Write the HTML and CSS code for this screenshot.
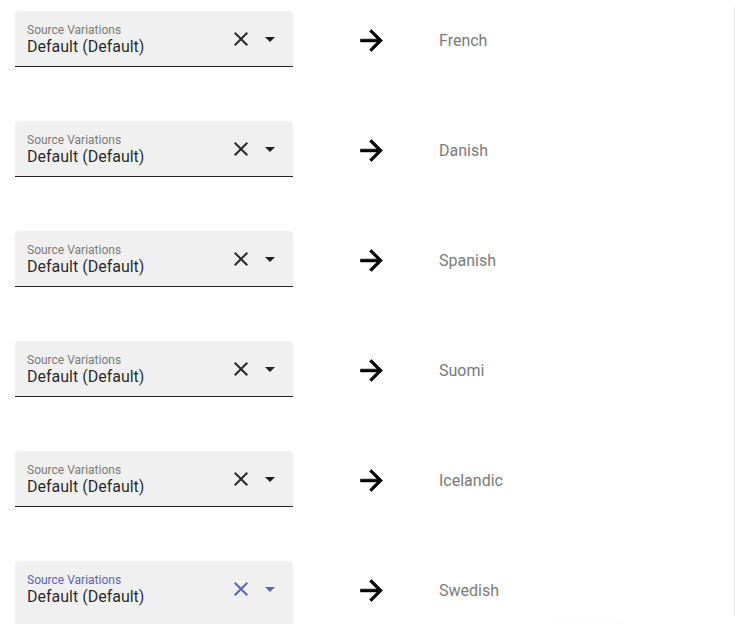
FILE: index.html
```html
<!DOCTYPE html>
<html lang="en">
<head>
<meta charset="utf-8">
<title>Variations</title>
<link rel="stylesheet" href="styles.css">
</head>
<body>
<div class="page">
  <main class="main">
    <div class="rows">
      <div class="row">
        <div class="field">
          <div class="infix"><div class="label">Source Variations</div><div class="value">Default (Default)</div></div>
          <svg class="clear" viewBox="0 0 24 24"><path d="M19 6.41L17.59 5 12 10.59 6.41 5 5 6.41 10.59 12 5 17.59 6.41 19 12 13.41 17.59 19 19 17.59 13.41 12z"/></svg>
          <span class="caret"></span>
        </div>
        <svg class="arrow" viewBox="0 0 24 24"><path d="M12 4l-1.41 1.41L16.17 11H4v2h12.17l-5.58 5.59L12 20l8-8z"/></svg>
        <div class="target">French</div>
      </div>
      <div class="row">
        <div class="field">
          <div class="infix"><div class="label">Source Variations</div><div class="value">Default (Default)</div></div>
          <svg class="clear" viewBox="0 0 24 24"><path d="M19 6.41L17.59 5 12 10.59 6.41 5 5 6.41 10.59 12 5 17.59 6.41 19 12 13.41 17.59 19 19 17.59 13.41 12z"/></svg>
          <span class="caret"></span>
        </div>
        <svg class="arrow" viewBox="0 0 24 24"><path d="M12 4l-1.41 1.41L16.17 11H4v2h12.17l-5.58 5.59L12 20l8-8z"/></svg>
        <div class="target">Danish</div>
      </div>
      <div class="row">
        <div class="field">
          <div class="infix"><div class="label">Source Variations</div><div class="value">Default (Default)</div></div>
          <svg class="clear" viewBox="0 0 24 24"><path d="M19 6.41L17.59 5 12 10.59 6.41 5 5 6.41 10.59 12 5 17.59 6.41 19 12 13.41 17.59 19 19 17.59 13.41 12z"/></svg>
          <span class="caret"></span>
        </div>
        <svg class="arrow" viewBox="0 0 24 24"><path d="M12 4l-1.41 1.41L16.17 11H4v2h12.17l-5.58 5.59L12 20l8-8z"/></svg>
        <div class="target">Spanish</div>
      </div>
      <div class="row">
        <div class="field">
          <div class="infix"><div class="label">Source Variations</div><div class="value">Default (Default)</div></div>
          <svg class="clear" viewBox="0 0 24 24"><path d="M19 6.41L17.59 5 12 10.59 6.41 5 5 6.41 10.59 12 5 17.59 6.41 19 12 13.41 17.59 19 19 17.59 13.41 12z"/></svg>
          <span class="caret"></span>
        </div>
        <svg class="arrow" viewBox="0 0 24 24"><path d="M12 4l-1.41 1.41L16.17 11H4v2h12.17l-5.58 5.59L12 20l8-8z"/></svg>
        <div class="target">Suomi</div>
      </div>
      <div class="row">
        <div class="field">
          <div class="infix"><div class="label">Source Variations</div><div class="value">Default (Default)</div></div>
          <svg class="clear" viewBox="0 0 24 24"><path d="M19 6.41L17.59 5 12 10.59 6.41 5 5 6.41 10.59 12 5 17.59 6.41 19 12 13.41 17.59 19 19 17.59 13.41 12z"/></svg>
          <span class="caret"></span>
        </div>
        <svg class="arrow" viewBox="0 0 24 24"><path d="M12 4l-1.41 1.41L16.17 11H4v2h12.17l-5.58 5.59L12 20l8-8z"/></svg>
        <div class="target">Icelandic</div>
      </div>
      <div class="row">
        <div class="field focused">
          <div class="infix"><div class="label">Source Variations</div><div class="value">Default (Default)</div></div>
          <svg class="clear" viewBox="0 0 24 24"><path d="M19 6.41L17.59 5 12 10.59 6.41 5 5 6.41 10.59 12 5 17.59 6.41 19 12 13.41 17.59 19 19 17.59 13.41 12z"/></svg>
          <span class="caret"></span>
        </div>
        <svg class="arrow" viewBox="0 0 24 24"><path d="M12 4l-1.41 1.41L16.17 11H4v2h12.17l-5.58 5.59L12 20l8-8z"/></svg>
        <div class="target">Swedish</div>
      </div>
    </div>
    <div class="footer"><div class="footer-btn"></div></div>
  </main>
  <div class="divider"></div>
</div>
</body>
</html>
```

FILE: styles.css
```css
html, body {
  margin: 0;
  padding: 0;
  height: 624px;
  overflow: hidden;
  background: #ffffff;
  font-family: Roboto, "Liberation Sans", sans-serif;
}

.page {
  display: flex;
  align-items: flex-start;
}

.main {
  width: 734px;
  padding-top: 11px;
}

.divider {
  width: 1px;
  height: 609px;
  margin-top: 7px;
  background: #e3e3e3;
}

.rows {
  display: flex;
  flex-direction: column;
  gap: 54px;
}

.row {
  display: flex;
  align-items: flex-start;
  height: 56px;
}

.field {
  box-sizing: border-box;
  width: 278px;
  height: 56px;
  margin-left: 15px;
  display: flex;
  align-items: flex-start;
  background: #f0f0f0;
  border-radius: 4px 4px 0 0;
  border-bottom: 1px solid rgba(0, 0, 0, 0.85);
  flex-shrink: 0;
}

.field.focused {
  height: 63px;
  border-bottom: none;
}

.infix {
  flex: 1;
  padding-left: 12px;
  padding-top: 12px;
}

.label {
  font-size: 12px;
  line-height: 14px;
  color: #7a7a7a;
}

.value {
  font-size: 16px;
  line-height: 19px;
  color: rgba(0, 0, 0, 0.85);
}

.clear {
  width: 24px;
  height: 24px;
  margin-top: 16px;
  fill: #2a2a2a;
  flex-shrink: 0;
}

.caret {
  width: 0;
  height: 0;
  margin-top: 26px;
  margin-left: 12px;
  margin-right: 18px;
  border-left: 5px solid transparent;
  border-right: 5px solid transparent;
  border-top: 5px solid #1e1e1e;
  flex-shrink: 0;
}

.focused .label {
  color: #5a64b8;
}

.focused .clear {
  fill: #5a64b8;
}

.focused .caret {
  border-top-color: #5a64b8;
}

.arrow {
  width: 33px;
  height: 33px;
  margin-left: 62px;
  margin-top: 13px;
  fill: #000000;
  stroke: #000000;
  stroke-width: 0.45;
  flex-shrink: 0;
}

.target {
  margin-left: 51px;
  margin-top: 20px;
  font-size: 16px;
  line-height: 19px;
  color: #7a7a7a;
}

.footer {
  margin-top: 6px;
  display: flex;
}

.footer-btn {
  width: 71px;
  height: 1px;
  margin-left: 553px;
  background: #ffffff;
  box-shadow: 0 0 3px rgba(0, 0, 0, 0.08);
}
```
